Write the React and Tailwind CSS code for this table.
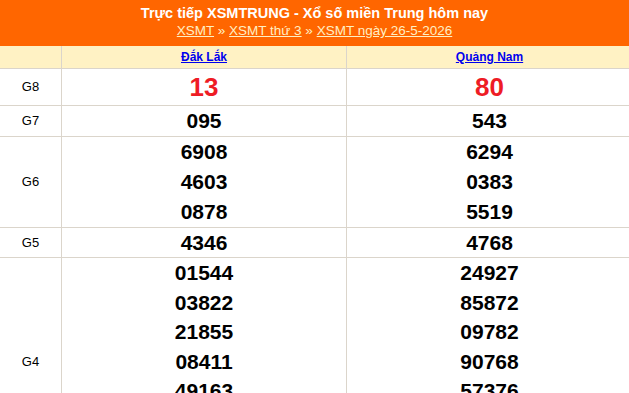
import React from 'react';

const provinces = [
  { name: 'Đắk Lắk', g8: '13', g7: '095', g6: ['6908', '4603', '0878'], g5: '4346', g4: ['01544', '03822', '21855', '08411', '49163', '12340', '67890'] },
  { name: 'Quảng Nam', g8: '80', g7: '543', g6: ['6294', '0383', '5519'], g5: '4768', g4: ['24927', '85872', '09782', '90768', '57376', '11520', '22931'] },
];

const line = 'border-[#dbd5cb]';

function Row({ label, values, lh, big }) {
  return (
    <div className={`grid grid-cols-[62px_285px_285px] border-b ${line}`}>
      <div className={`flex items-center justify-center border-r ${line} text-[13px] text-black`}>{label}</div>
      {values.map((v, i) => (
        <div key={i} className={`text-center ${i === 0 ? `border-r ${line}` : ''}`}>
          {(Array.isArray(v) ? v : [v]).map((n, j) => (
            <div
              key={j}
              className={`font-bold ${lh} ${big ? 'text-[26px] text-[#ee1c25]' : 'text-[21px] text-black'}`}
            >
              {n}
            </div>
          ))}
        </div>
      ))}
    </div>
  );
}

export default function App() {
  return (
    <div className="w-[629px] h-[393px] overflow-hidden bg-white font-['Liberation_Sans',Arial,sans-serif]">
      <div className="bg-[#ff6600] h-[46px] flex flex-col items-center pt-[5px] text-white">
        <div className="text-[14.5px] font-bold leading-[17px]">Trực tiếp XSMTRUNG - Xổ số miền Trung hôm nay</div>
        <div className="text-[13.5px] leading-[17px] text-[#ffefc4]">
          <a href="#" className="underline">XSMT</a> » <a href="#" className="underline">XSMT thứ 3</a> »{' '}
          <a href="#" className="underline">XSMT ngày 26-5-2026</a>
        </div>
      </div>
      <div className={`grid grid-cols-[62px_285px_285px] h-[23px] bg-[#fff2c4] border-b ${line}`}>
        <div className={`border-r ${line}`} />
        {provinces.map((p, i) => (
          <div key={p.name} className={`text-center text-[12px] font-bold leading-[22px] ${i === 0 ? `border-r ${line}` : ''}`}>
            <a href="#" className="text-[#0000ee] underline">{p.name}</a>
          </div>
        ))}
      </div>
      <Row label="G8" values={provinces.map((p) => p.g8)} lh="leading-[36px]" big />
      <Row label="G7" values={provinces.map((p) => p.g7)} lh="leading-[30px]" />
      <Row label="G6" values={provinces.map((p) => p.g6)} lh="leading-[30px]" />
      <Row label="G5" values={provinces.map((p) => p.g5)} lh="leading-[29px]" />
      <Row label="G4" values={provinces.map((p) => p.g4)} lh="leading-[29.5px]" />
    </div>
  );
}
